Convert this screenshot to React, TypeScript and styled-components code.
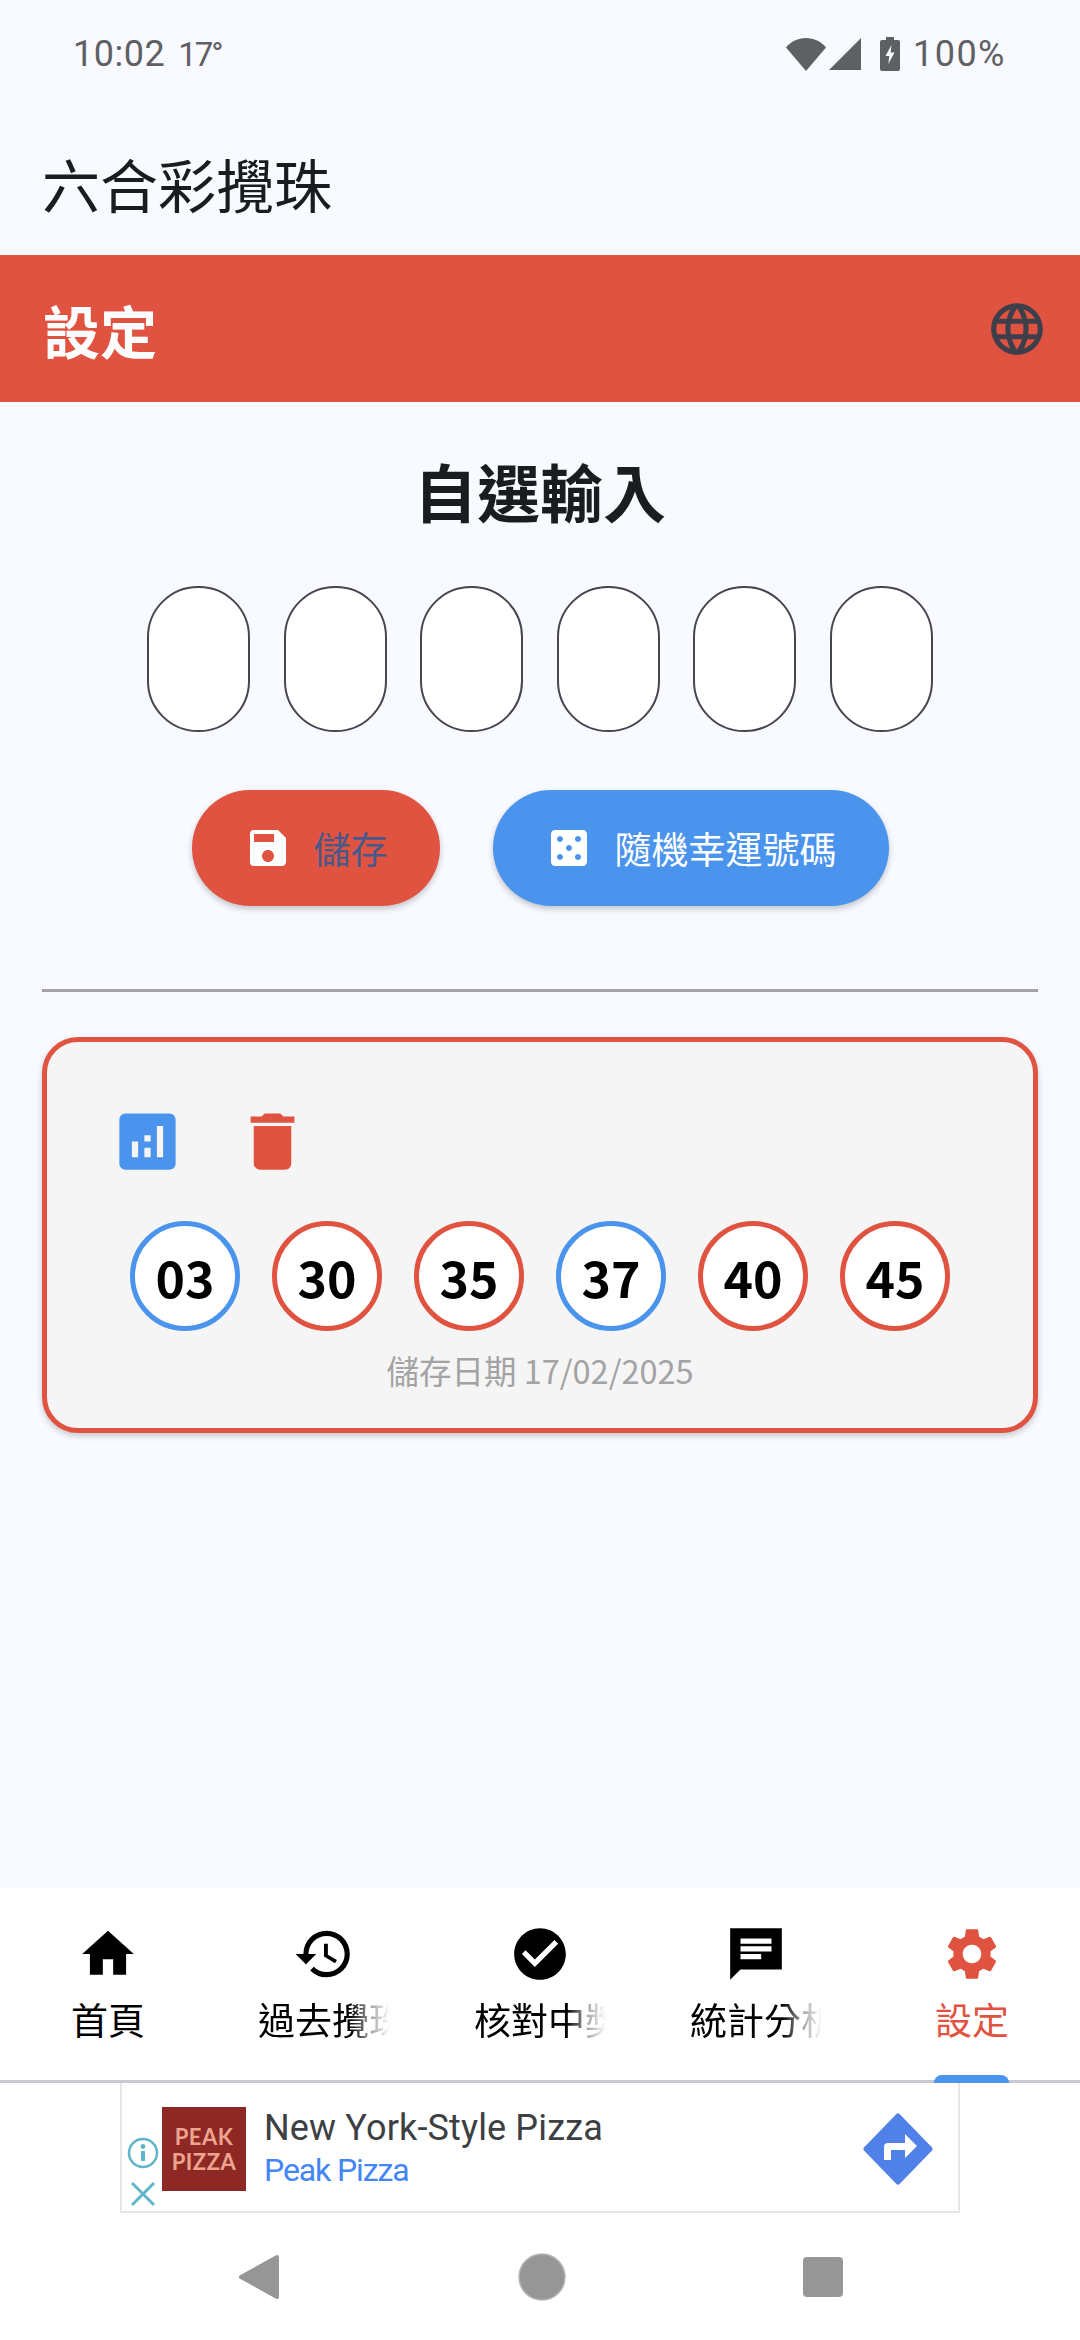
import React from "react";
import styled, { createGlobalStyle } from "styled-components";
import { MdLanguage, MdSave, MdCasino, MdDelete, MdHome, MdHistory, MdCheckCircle, MdSettings } from "react-icons/md";

const RED = "#e05340";
const BLUE = "#4a94ee";
const CJK = `"Noto Sans CJK TC", "Noto Sans", sans-serif`;

const Global = createGlobalStyle`
  * { box-sizing: border-box; }
  html, body { margin: 0; padding: 0; background: #f8faff; }
  body { font-family: ${CJK}; }
`;

const Page = styled.div`
  width: 1080px;
  height: 2340px;
  display: flex;
  flex-direction: column;
  background: #f8faff;
  overflow: hidden;
`;

const StatusBar = styled.div`
  flex: none;
  height: 108px;
  padding: 0 74px 0 73px;
  display: flex;
  align-items: center;
  justify-content: space-between;
  color: #5f6064;
  font-family: Roboto, sans-serif;
  font-size: 36px;
`;
const StatusLeft = styled.div`
  display: flex;
  align-items: baseline;
  gap: 13px;
  letter-spacing: 0.5px;
`;
const SmallTemp = styled.span`
  font-size: 33px;
  letter-spacing: -2px;
`;
const BatteryText = styled.span`
  letter-spacing: 1.5px;
`;
const StatusRight = styled.div`
  display: flex;
  align-items: center;
`;
const StatusIcon = styled.svg<{ $gap: number }>`
  display: block;
  margin-right: ${(p) => p.$gap}px;
  fill: #5f6064;
`;

const TitleBar = styled.div`
  flex: none;
  height: 147px;
  padding: 2px 42px 0;
  display: flex;
  align-items: center;
  font-size: 58px;
  color: #1a1c20;
`;

const RedBar = styled.div`
  flex: none;
  height: 147px;
  background: ${RED};
  padding: 0 32px 0 43px;
  display: flex;
  align-items: center;
  justify-content: space-between;
  color: #fff;
  font-size: 57px;
  font-weight: 700;
  svg { color: #3e3f4b; }
`;

const Main = styled.main`
  flex: 1;
  display: flex;
  flex-direction: column;
  min-height: 0;
`;
const Heading = styled.h1`
  margin: 0;
  flex: none;
  height: 184px;
  padding-bottom: 9px;
  display: flex;
  align-items: center;
  justify-content: center;
  font-size: 63px;
  font-weight: 700;
  color: #1a1c20;
`;
const InputRow = styled.div`
  flex: none;
  display: flex;
  justify-content: center;
  gap: 33.6px;
`;
const NumberInput = styled.div`
  width: 103px;
  height: 146px;
  border-radius: 51px;
  border: 2.5px solid #45464f;
  background: #fff;
`;
const ButtonRow = styled.div`
  flex: none;
  display: flex;
  justify-content: center;
  gap: 53px;
  margin-top: 58px;
`;
const ActionButton = styled.button<{ $bg: string; $fg: string }>`
  height: 116px;
  padding: 0 52px;
  border: 0;
  border-radius: 58px;
  background: ${(p) => p.$bg};
  color: ${(p) => p.$fg};
  display: flex;
  align-items: center;
  gap: 22px;
  font-family: ${CJK};
  font-size: 37px;
  box-shadow: 0 3px 6px rgba(0, 0, 0, 0.22);
  svg { color: #fff; flex: none; }
`;
const Divider = styled.hr`
  flex: none;
  margin: 83px 42px 0;
  height: 3px;
  border: 0;
  background: #a2a2a8;
`;
const Card = styled.section`
  flex: none;
  margin: 45px 42px 0;
  padding: 62px 0 35px;
  border: 5px solid ${RED};
  border-radius: 36px;
  background: #f5f5f5;
  box-shadow: 0 3px 6px rgba(0, 0, 0, 0.2);
`;
const CardIcons = styled.div`
  display: flex;
  gap: 50px;
  padding-left: 63px;
  height: 76px;
`;
const IconSlot = styled.span<{ $color: string }>`
  display: block;
  color: ${(p) => p.$color};
  height: 76px;
  svg { display: block; }
`;
const BallRow = styled.div`
  display: flex;
  justify-content: center;
  gap: 32px;
  margin-top: 41px;
`;
const Ball = styled.div<{ $color: string }>`
  width: 110px;
  height: 110px;
  border-radius: 50%;
  border: 5px solid ${(p) => p.$color};
  background: #fff;
  display: flex;
  align-items: center;
  justify-content: center;
  font-size: 50px;
  font-weight: 700;
  color: #000;
`;
const SavedDate = styled.div`
  margin-top: 16px;
  height: 46px;
  line-height: 46px;
  text-align: center;
  font-size: 32.5px;
  color: #a3a3a3;
`;

const BottomNav = styled.nav`
  flex: none;
  position: relative;
  height: 195px;
  background: #fff;
  border-bottom: 3px solid #c8c9d2;
  display: grid;
  grid-template-columns: repeat(5, 216px);
`;
const Tab = styled.div<{ $active?: boolean }>`
  position: relative;
  display: flex;
  flex-direction: column;
  align-items: center;
  padding-top: 35px;
  color: ${(p) => (p.$active ? RED : "#000")};
  svg { display: block; flex: none; }
`;
const TabLabel = styled.span<{ $fade?: boolean }>`
  margin-top: 7px;
  font-size: 37px;
  line-height: 54px;
  font-weight: 400;
  white-space: nowrap;
  ${(p) =>
    p.$fade &&
    `width: 132px;
     overflow: hidden;
     -webkit-mask-image: linear-gradient(90deg, #000 70%, rgba(0,0,0,0.4) 84%, transparent 100%);
     mask-image: linear-gradient(90deg, #000 70%, rgba(0,0,0,0.4) 84%, transparent 100%);`}
`;
const TabMarker = styled.span`
  position: absolute;
  left: 70px;
  bottom: -3px;
  width: 75px;
  height: 8px;
  border-radius: 8px 8px 0 0;
  background: ${BLUE};
`;

const AdZone = styled.div`
  flex: none;
  height: 130px;
  background: #fff;
  display: flex;
  justify-content: center;
`;
const AdBox = styled.div`
  width: 840px;
  height: 130px;
  border: solid #e6e6ea;
  border-width: 0 2px 2px 2px;
  padding: 24px 25px 0 5px;
  display: flex;
  background: #fff;
`;
const AdChoices = styled.div`
  width: 32px;
  margin-right: 3px;
  display: flex;
  flex-direction: column;
  align-items: center;
  padding-top: 30px;
  gap: 12px;
  svg { display: block; flex: none; }
`;
const AdLogo = styled.div`
  width: 84px;
  height: 84px;
  background: #8e2824;
  color: #eda48f;
  font-family: Lato, sans-serif;
  font-weight: 700;
  font-size: 22px;
  line-height: 25px;
  letter-spacing: 0.5px;
  display: flex;
  flex-direction: column;
  align-items: center;
  justify-content: center;
`;
const AdText = styled.div`
  flex: 1;
  margin-left: 18px;
  font-family: Roboto, sans-serif;
`;
const AdTitle = styled.div`
  font-size: 36px;
  line-height: 42px;
  color: #3c4043;
  letter-spacing: 0.15px;
`;
const AdSub = styled.div`
  font-size: 32px;
  line-height: 38px;
  color: #4285f4;
  margin-top: 2px;
  letter-spacing: -1.1px;
`;
const AdArrow = styled.svg`
  display: block;
  margin-top: 6px;
`;

const SystemNav = styled.div`
  flex: none;
  height: 127px;
  background: #fff;
  display: flex;
  align-items: center;
  justify-content: center;
`;
const SysIcon = styled.svg<{ $left?: number }>`
  display: block;
  fill: #969696;
  margin-left: ${(p) => p.$left ?? 0}px;
`;

const balls: [string, string][] = [
  ["03", BLUE],
  ["30", RED],
  ["35", RED],
  ["37", BLUE],
  ["40", RED],
  ["45", RED],
];

export default function App() {
  return (
    <Page>
      <Global />
      <StatusBar>
        <StatusLeft>
          <span>10:02</span>
          <SmallTemp>17°</SmallTemp>
        </StatusLeft>
        <StatusRight>
          <StatusIcon $gap={3} width="40" height="33" viewBox="0 0 40 33">
            <path d="M0 9.5C5 3.5 12 0 20 0s15 3.5 20 9.5L20 33z" />
          </StatusIcon>
          <StatusIcon $gap={19} width="32" height="32" viewBox="0 0 32 32">
            <path d="M32 0v32H0z" />
          </StatusIcon>
          <StatusIcon $gap={13} width="20" height="34" viewBox="0 0 20 34">
            <path d="M6 0h8v3h4a2 2 0 0 1 2 2v27a2 2 0 0 1-2 2H2a2 2 0 0 1-2-2V5a2 2 0 0 1 2-2h4z" />
            <path fill="#f8faff" d="M11.5 8 5.5 19h3.8l-1 8 6.2-11.5h-3.9z" />
          </StatusIcon>
          <BatteryText>100%</BatteryText>
        </StatusRight>
      </StatusBar>

      <TitleBar>六合彩攪珠</TitleBar>

      <RedBar>
        <span>設定</span>
        <MdLanguage size={62} />
      </RedBar>

      <Main>
        <Heading>自選輸入</Heading>
        <InputRow>
          {[0, 1, 2, 3, 4, 5].map((i) => (
            <NumberInput key={i} />
          ))}
        </InputRow>
        <ButtonRow>
          <ActionButton $bg={RED} $fg="#46598a">
            <MdSave size={48} />
            儲存
          </ActionButton>
          <ActionButton $bg={BLUE} $fg="#fff">
            <MdCasino size={48} />
            隨機幸運號碼
          </ActionButton>
        </ButtonRow>
        <Divider />
        <Card>
          <CardIcons>
            <IconSlot $color={BLUE}>
              <svg width="75" height="75" viewBox="0 0 24 24" fill="currentColor">
                <path d="M19 3H5c-1.1 0-2 .9-2 2v14c0 1.1.9 2 2 2h14c1.1 0 2-.9 2-2V5c0-1.1-.9-2-2-2zM9 17H7v-5h2v5zm4 0h-2v-3h2v3zm0-5h-2v-2h2v2zm4 5h-2V7h2v10z" />
              </svg>
            </IconSlot>
            <IconSlot $color={RED}>
              <MdDelete size={75} />
            </IconSlot>
          </CardIcons>
          <BallRow>
            {balls.map(([n, c]) => (
              <Ball key={n} $color={c}>
                {n}
              </Ball>
            ))}
          </BallRow>
          <SavedDate>儲存日期 17/02/2025</SavedDate>
        </Card>
      </Main>

      <BottomNav>
        <Tab>
          <MdHome size={62} />
          <TabLabel>首頁</TabLabel>
        </Tab>
        <Tab>
          <MdHistory size={62} />
          <TabLabel $fade>過去攪珠</TabLabel>
        </Tab>
        <Tab>
          <MdCheckCircle size={62} />
          <TabLabel $fade>核對中獎</TabLabel>
        </Tab>
        <Tab>
          <svg width="62" height="62" viewBox="0 0 24 24" fill="currentColor">
            <path d="M2 2h20v16H6l-4 4zM6 6v2h12V6zm0 3v2h12V9zm0 3v2h8v-2z" fillRule="evenodd" />
          </svg>
          <TabLabel $fade>統計分析</TabLabel>
        </Tab>
        <Tab $active>
          <MdSettings size={62} />
          <TabLabel>設定</TabLabel>
          <TabMarker />
        </Tab>
      </BottomNav>

      <AdZone>
        <AdBox>
          <AdChoices>
            <svg width="32" height="32" viewBox="0 0 32 32" fill="none">
              <circle cx="16" cy="16" r="14" stroke="#5fb5c9" strokeWidth="2.5" />
              <rect x="14" y="14" width="4" height="10" fill="#5fb5c9" />
              <circle cx="16" cy="9.5" r="2.4" fill="#5fb5c9" />
            </svg>
            <svg width="26" height="26" viewBox="0 0 26 26" fill="none">
              <path d="M2 2l22 22M24 2 2 24" stroke="#5fb5c9" strokeWidth="3" />
            </svg>
          </AdChoices>
          <AdLogo>
            <span>PEAK</span>
            <span>PIZZA</span>
          </AdLogo>
          <AdText>
            <AdTitle>New York-Style Pizza</AdTitle>
            <AdSub>Peak Pizza</AdSub>
          </AdText>
          <AdArrow width="70" height="72" viewBox="0 0 70 72">
            <path d="M35 3 67 36 35 69 3 36z" fill="#4f81e8" stroke="#4f81e8" strokeWidth="5" strokeLinejoin="round" />
            <path d="M21 47V34q0-4 4-4H42V21L54 33 42 45V37H28V47z" fill="#fff" />
          </AdArrow>
        </AdBox>
      </AdZone>

      <SystemNav>
        <SysIcon width="42" height="46" viewBox="0 0 42 46">
          <path d="M39 3 3 23l36 20z" stroke="#969696" strokeWidth="4" strokeLinejoin="round" />
        </SysIcon>
        <SysIcon $left={238} width="48" height="48" viewBox="0 0 48 48">
          <circle cx="24" cy="24" r="23" stroke="#b5b5b5" strokeWidth="1.5" />
        </SysIcon>
        <SysIcon $left={237} width="40" height="40" viewBox="0 0 40 40">
          <rect width="40" height="40" rx="4" />
        </SysIcon>
      </SystemNav>
    </Page>
  );
}
